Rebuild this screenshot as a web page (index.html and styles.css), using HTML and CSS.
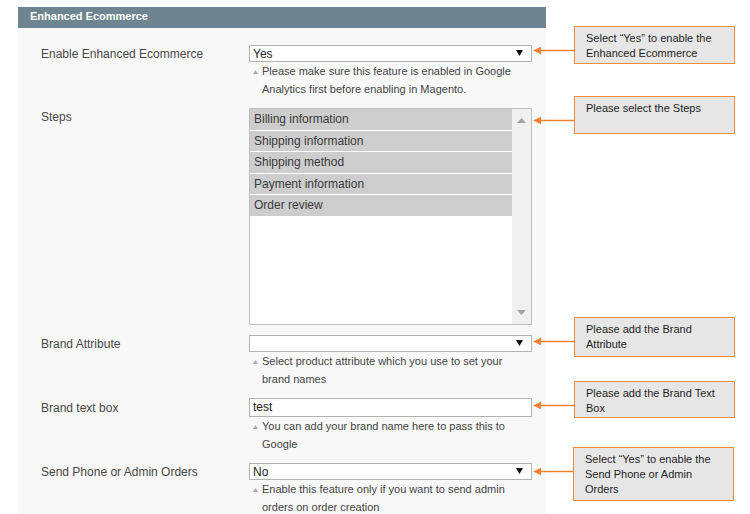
FILE: index.html
```html
<!DOCTYPE html>
<html lang="en">
<head>
<meta charset="utf-8">
<title>Enhanced Ecommerce</title>
<link rel="stylesheet" href="styles.css">
</head>
<body>
<div class="page">
  <section class="panel">
    <header class="panel-head">Enhanced Ecommerce</header>
    <div class="form">

      <div class="row">
        <div class="label">Enable Enhanced Ecommerce</div>
        <div class="field">
          <div class="select"><span class="value">Yes</span><svg class="caret" width="7" height="6" viewBox="0 0 7 6"><polygon points="0,0 7,0 3.5,6" fill="#111"/></svg></div>
          <p class="note"><svg class="tri" width="5" height="4" viewBox="0 0 5 4"><polygon points="0,4 5,4 2.5,0" fill="#a9a9a9"/></svg>Please make sure this feature is enabled in Google Analytics first before enabling in Magento.</p>
        </div>
        <div class="annot annot-1">
          <svg class="arrow" width="41" height="9" viewBox="0 0 41 9"><line x1="6" y1="4.5" x2="41" y2="4.5" stroke="#ef8232" stroke-width="1.3"/><polygon points="0,4.5 8,0.8 8,8.2" fill="#ef8232"/></svg>
          <div class="callout h38">Select “Yes” to enable the Enhanced Ecommerce</div>
        </div>
      </div>

      <div class="row">
        <div class="label">Steps</div>
        <div class="field">
          <div class="multi">
            <ul class="options">
              <li>Billing information</li>
              <li>Shipping information</li>
              <li>Shipping method</li>
              <li>Payment information</li>
              <li>Order review</li>
            </ul>
            <div class="scrollbar">
              <svg width="9" height="5" viewBox="0 0 9 5"><polygon points="0,5 9,5 4.5,0" fill="#a3a3a3"/></svg>
              <svg width="9" height="5" viewBox="0 0 9 5"><polygon points="0,0 9,0 4.5,5" fill="#a3a3a3"/></svg>
            </div>
          </div>
        </div>
        <div class="annot annot-2">
          <svg class="arrow" width="41" height="9" viewBox="0 0 41 9"><line x1="6" y1="4.5" x2="41" y2="4.5" stroke="#ef8232" stroke-width="1.3"/><polygon points="0,4.5 8,0.8 8,8.2" fill="#ef8232"/></svg>
          <div class="callout h38">Please select the Steps</div>
        </div>
      </div>

      <div class="row">
        <div class="label">Brand Attribute</div>
        <div class="field">
          <div class="select"><span class="value"></span><svg class="caret" width="7" height="6" viewBox="0 0 7 6"><polygon points="0,0 7,0 3.5,6" fill="#111"/></svg></div>
          <p class="note"><svg class="tri" width="5" height="4" viewBox="0 0 5 4"><polygon points="0,4 5,4 2.5,0" fill="#a9a9a9"/></svg>Select product attribute which you use to set your brand names</p>
        </div>
        <div class="annot annot-3">
          <svg class="arrow" width="41" height="9" viewBox="0 0 41 9"><line x1="6" y1="4.5" x2="41" y2="4.5" stroke="#ef8232" stroke-width="1.3"/><polygon points="0,4.5 8,0.8 8,8.2" fill="#ef8232"/></svg>
          <div class="callout h40">Please add the Brand Attribute</div>
        </div>
      </div>

      <div class="row">
        <div class="label label-input">Brand text box</div>
        <div class="field">
          <div class="input">test</div>
          <p class="note"><svg class="tri" width="5" height="4" viewBox="0 0 5 4"><polygon points="0,4 5,4 2.5,0" fill="#a9a9a9"/></svg>You can add your brand name here to pass this to Google</p>
        </div>
        <div class="annot annot-4">
          <svg class="arrow" width="41" height="9" viewBox="0 0 41 9"><line x1="6" y1="4.5" x2="41" y2="4.5" stroke="#ef8232" stroke-width="1.3"/><polygon points="0,4.5 8,0.8 8,8.2" fill="#ef8232"/></svg>
          <div class="callout h37">Please add the Brand Text Box</div>
        </div>
      </div>

      <div class="row">
        <div class="label">Send Phone or Admin Orders</div>
        <div class="field">
          <div class="select"><span class="value">No</span><svg class="caret" width="7" height="6" viewBox="0 0 7 6"><polygon points="0,0 7,0 3.5,6" fill="#111"/></svg></div>
          <p class="note"><svg class="tri" width="5" height="4" viewBox="0 0 5 4"><polygon points="0,4 5,4 2.5,0" fill="#a9a9a9"/></svg>Enable this feature only if you want to send admin orders on order creation</p>
        </div>
        <div class="annot annot-5">
          <svg class="arrow" width="40" height="9" viewBox="0 0 40 9"><line x1="6" y1="4.5" x2="40" y2="4.5" stroke="#ef8232" stroke-width="1.3"/><polygon points="0,4.5 8,0.8 8,8.2" fill="#ef8232"/></svg>
          <div class="callout h54">Select “Yes” to enable the Send Phone or Admin Orders</div>
        </div>
      </div>

    </div>
  </section>
</div>
</body>
</html>
```

FILE: styles.css
```css
html, body {
  margin: 0;
  padding: 0;
  background: #ffffff;
  overflow: hidden;
}

body {
  font-family: "Liberation Sans", Arial, sans-serif;
  color: #404040;
}

.page {
  padding: 7px 0 0 18px;
}

.panel {
  width: 528px;
  min-height: 507px;
  background: #f8f8f8;
}

.panel-head {
  height: 21px;
  line-height: 19px;
  padding-left: 12px;
  background: #6d8590;
  color: #ffffff;
  font-size: 11px;
  font-weight: bold;
}

.form {
  display: flex;
  flex-direction: column;
  gap: 10px;
  padding: 17px 0 0 23px;
}

.row {
  display: flex;
  align-items: flex-start;
}

.label {
  flex: none;
  width: 208px;
  padding-top: 1px;
  font-size: 12px;
  line-height: 17px;
  color: #474747;
}

.label-input {
  line-height: 18px;
}

.field {
  flex: none;
  width: 283px;
}

.select {
  box-sizing: border-box;
  height: 17px;
  display: flex;
  align-items: center;
  justify-content: space-between;
  padding: 0 8px 0 3px;
  background: #ffffff;
  border: 1px solid #b3b3b3;
  font-size: 12px;
  color: #222222;
}

.caret {
  display: block;
  margin-top: -2px;
}

.input {
  box-sizing: border-box;
  height: 19px;
  line-height: 17px;
  padding-left: 3px;
  background: #ffffff;
  border: 1px solid #b3b3b3;
  font-size: 12px;
  color: #222222;
}

.note {
  margin: 0;
  padding-left: 13px;
  text-indent: -9px;
  font-size: 11px;
  line-height: 18px;
  color: #444444;
}

.tri {
  display: inline-block;
  margin-right: 4px;
  vertical-align: 1px;
}

.multi {
  box-sizing: border-box;
  height: 217px;
  display: flex;
  background: #ffffff;
  border: 1px solid #bdbdbd;
}

.options {
  flex: 1;
  margin: 0;
  padding: 0;
  list-style: none;
  display: flex;
  flex-direction: column;
  gap: 1px;
}

.options li {
  height: 20.6px;
  line-height: 20px;
  padding-left: 4px;
  background: #cdcdcd;
  font-size: 12px;
  color: #3a3a3a;
}

.scrollbar {
  flex: none;
  width: 19px;
  background: #f0f0f0;
  display: flex;
  flex-direction: column;
  justify-content: space-between;
  align-items: center;
  padding: 9px 0 9px;
}

.scrollbar svg {
  display: block;
}

.annot {
  flex: none;
  display: flex;
  align-items: flex-start;
  margin-left: 1px;
}

.annot-1 { margin-top: -19px; }
.annot-2 { margin-top: -12px; }
.annot-3 { margin-top: -18px; }
.annot-4 { margin-top: -17px; }
.annot-5 { margin-top: -16px; }

.arrow {
  display: block;
  flex: none;
  margin-top: 20px;
}

.callout {
  box-sizing: border-box;
  width: 161px;
  padding: 4px 12px 0 11px;
  background: #e6e6e6;
  border: 1.5px solid #ef8a3e;
  font-size: 11px;
  line-height: 15px;
  color: #1e1e1e;
}

.h37 { height: 37px; }
.h38 { height: 38px; }
.h40 { height: 40px; }
.h54 { height: 54px; }
```
